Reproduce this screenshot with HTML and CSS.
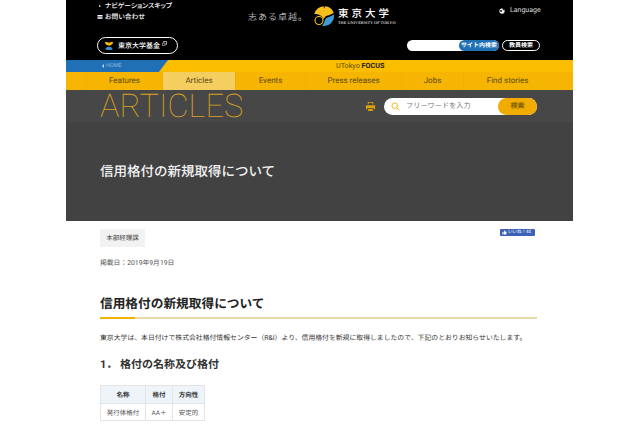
FILE: index.html
```html
<!DOCTYPE html>
<html lang="ja">
<head>
<meta charset="utf-8">
<title>信用格付の新規取得について</title>
<link rel="stylesheet" href="styles.css">
</head>
<body>
<div class="page">
  <header class="top">
    <div class="top-col top-left">
      <div class="skip-links">
        <div class="skip-link"><svg class="mini" viewBox="0 0 6 6"><path d="M2.200 0.500 L3.800 2.500 L2.200 3Z" fill="#fff"/></svg>ナビゲーションスキップ</div>
        <div class="skip-link"><svg class="mini" viewBox="0 0 6 6"><path d="M0.500 1H5.500V2.400H0.500ZM0.500 3.200H5.500V4.800H0.500Z" fill="#fff"/></svg>お問い合わせ</div>
      </div>
      <div class="fund-btn">
        <svg class="fund-icon" viewBox="0 0 12 12"><path d="M1 1.500C3 .7 4.500 1.200 6 2 7.500 1.200 9 .7 11 1.500 10.500 4 8.500 5.400 6 5.600 3.500 5.400 1.500 4 1 1.500Z" fill="#f5b800"/><path d="M1.500 10C2.500 7.800 4 7 6 7s3.500.8 4.500 3C9 11.200 3 11.200 1.500 10Z" fill="#3a8fd0"/></svg>
        <span>東京大学基金</span>
        <svg class="ext" viewBox="0 0 6 6"><path d="M2 .5H5.500V4H4M2 .5V2" fill="none" stroke="#fff" stroke-width=".8"/><path d="M.5 2.500H3.500V5.500H.5Z" fill="none" stroke="#fff" stroke-width=".6"/></svg>
      </div>
    </div>
    <div class="top-center">
      <span class="motto">志ある卓越。</span>
      <svg class="ginkgo" viewBox="0 0 20 20">
        <path d="M.3 8A10 10 0 0 1 9.600.2L10.300 2.800 11 .2A10 10 0 0 1 19.800 7C16 9 13 9.500 11.500 10.500L9.500 13C8.500 10 5 8 .3 8Z" fill="#f6bf1c"/>
        <path d="M19.900 8.500A10 10 0 0 1 8 19.800C10 18 10.500 14.500 12 12 15 11 17.500 10 19.900 8.500Z" fill="#3f9bd8"/>
        <circle cx="5" cy="14.500" r="4" fill="none" stroke="#f6bf1c" stroke-width="1.100"/>
      </svg>
      <div class="utokyo">
        <span class="utokyo-ja">東京大学</span>
        <span class="utokyo-en">THE UNIVERSITY OF TOKYO</span>
      </div>
    </div>
    <div class="top-col top-right">
      <div class="lang"><svg class="globe" viewBox="0 0 8 8"><circle cx="4" cy="4" r="3.500" fill="#fff"/><path d="M1 3H4V5H2ZM5 1H6.500V3H5Z" fill="#000"/></svg>Language</div>
      <div class="site-search">
        <div class="search-field"><span class="search-tag">サイト内検索</span></div>
        <span class="staff-btn">教員検索</span>
      </div>
    </div>
  </header>

  <div class="focus-bar">
    <div class="home-tab"><span class="home-arrow"></span>HOME</div>
    <div class="focus-title">UTokyo <b>FOCUS</b></div>
  </div>

  <nav class="nav">
    <a class="nav-item">Features</a>
    <a class="nav-item nav-current">Articles</a>
    <a class="nav-item">Events</a>
    <a class="nav-item">Press releases</a>
    <a class="nav-item">Jobs</a>
    <a class="nav-item">Find stories</a>
  </nav>

  <div class="articles-bar">
    <div class="articles-title">ARTICLES</div>
    <div class="articles-tools">
      <svg class="printer" viewBox="0 0 12 12"><path d="M3 1H9V3.500H8V2H4V3.500H3ZM1 4.500H11V9H9.500V7.500H2.500V9H1ZM3.500 8.500H8.500V11H3.500Z" fill="#dca000"/></svg>
      <div class="free-search">
        <svg class="lens" viewBox="0 0 12 12"><circle cx="5" cy="5" r="3.700" fill="none" stroke="#f2b200" stroke-width="1.200"/><path d="M7.800 7.800L11 11" stroke="#f2b200" stroke-width="1.300"/></svg>
        <span class="free-text">フリーワードを入力</span>
        <span class="free-btn">検索</span>
      </div>
    </div>
  </div>

  <section class="hero">
    <h1 class="hero-title">信用格付の新規取得について</h1>
  </section>

  <main class="content">
    <div class="meta-row">
      <span class="dept">本部経理課</span>
      <span class="like"><svg class="thumb" viewBox="0 0 6 6"><path d="M.5 2.500H1.500V5.500H.5ZM2 2.500L3 .5H3.800V2H5.500L5 5.500H2Z" fill="#fff"/></svg>いいね！48</span>
    </div>
    <p class="date">掲載日：2019年9月19日</p>
    <h2 class="main-head">信用格付の新規取得について</h2>
    <p class="lead">東京大学は、本日付けで株式会社格付情報センター（R&amp;I）より、信用格付を新規に取得しましたので、下記のとおりお知らせいたします。</p>
    <h3 class="sub-head">1． 格付の名称及び格付</h3>
    <table class="rating">
      <tr><th>名称</th><th>格付</th><th>方向性</th></tr>
      <tr><td>発行体格付</td><td>AA＋</td><td>安定的</td></tr>
    </table>
  </main>
</div>
</body>
</html>
```

FILE: styles.css
```css
* { box-sizing: border-box; }
html, body { margin: 0; padding: 0; background: #fff; height: 426px; overflow: hidden; }
body { font-family: "Roboto", "Noto Sans CJK JP", sans-serif; color: #333; text-rendering: geometricPrecision; }
.page { width: 507px; margin-left: 66px; }

.top { height: 60px; background: #000; display: flex; color: #fff; }
.top-col { display: flex; flex-direction: column; }
.top-left { width: 170px; padding: 2px 0 0 31px; }
.skip-links { display: flex; flex-direction: column; gap: 1px; height: 35px; }
.skip-link { font-size: 6.800px; line-height: 9.500px; font-weight: 500; font-feature-settings: "palt"; display: flex; align-items: center; gap: 2px; }
.mini { width: 6px; height: 6px; }
.fund-btn { width: 81px; height: 17px; border: 1px solid #fff; border-radius: 9px; display: flex; align-items: center; padding-left: 6px; gap: 2px; font-size: 7px; font-weight: 500; }
.fund-icon { width: 10px; height: 10px; margin-right: 2px; }
.ext { width: 5px; height: 5px; align-self: flex-start; margin-top: 3px; }
.top-center { width: 155px; height: 32px; display: flex; align-items: center; padding-left: 12px; }
.motto { font-family: "Noto Sans CJK JP", serif; font-size: 9px; font-weight: 300; letter-spacing: 1px; width: 66px; white-space: nowrap; color: #eee; flex: none; }
.ginkgo { width: 20px; height: 20px; margin-right: 4px; flex: none; }
.utokyo { display: flex; flex-direction: column; flex: none; }
.utokyo-ja { font-family: "Noto Sans CJK JP", serif; font-size: 10.500px; line-height: 12px; letter-spacing: 3px; font-weight: 500; white-space: nowrap; }
.utokyo-en { font-family: "Liberation Serif", serif; font-size: 4.300px; line-height: 5px; white-space: nowrap; }
.top-right { flex: 1; padding-left: 16px; }
.lang { font-size: 7px; line-height: 9px; margin: 6px 0 0 92px; display: flex; align-items: center; gap: 5px; height: 9px; color: #ddd; }
.globe { width: 6px; height: 6px; }
.site-search { display: flex; margin-top: 25px; gap: 3px; }
.search-field { width: 92px; height: 11px; background: #fff; border-radius: 6px; display: flex; justify-content: flex-end; }
.search-tag { width: 40px; height: 11px; background: #1f70b4; border-radius: 6px; font-size: 6px; line-height: 11px; font-weight: 700; text-align: center; white-space: nowrap; }
.staff-btn { width: 38px; height: 11px; border: 1px solid #fff; border-radius: 6px; font-size: 6px; line-height: 9px; font-weight: 700; text-align: center; }

.focus-bar { height: 12px; background: #fbbd00; display: flex; }
.home-tab { width: 102px; background: #1f70b4; clip-path: polygon(0 0, 100% 0, 91% 100%, 0 100%); padding-left: 36px; color: #8db8dc; font-size: 5.500px; line-height: 12px; display: flex; align-items: center; gap: 2px; }
.home-arrow { border-top: 2px solid transparent; border-bottom: 2px solid transparent; border-right: 2px solid #ccdcec; width: 2px; height: 4px; }
.focus-title { flex: 1; padding-left: 168px; font-size: 7.200px; line-height: 12px; color: #5b4a10; }
.focus-title b { color: #222; font-weight: 700; }

.nav { height: 18px; background: #f5b502; display: grid; grid-template-columns: 20px 76px 73px 70px 96px 62px 88px 22px; }
.nav::before, .nav::after { content: ""; }
.nav-item { font-size: 8px; line-height: 18px; text-align: center; color: #5c4a10; border-left: 1px solid #efb000; }
.nav-current { background: #f5ce60; }

.articles-bar { height: 32px; background: #474747; display: flex; justify-content: space-between; }
.articles-title { font-weight: 100; font-size: 32.600px; line-height: 32px; color: #d9a31f; margin-left: 34px; height: 32px; }
.articles-tools { display: flex; align-items: center; padding-right: 36px; gap: 8px; height: 32px; }
.printer { width: 11px; height: 11px; }
.free-search { width: 153px; height: 17px; background: #fff; border-radius: 9px; display: flex; align-items: center; padding-left: 7px; }
.lens { width: 9px; height: 9px; margin-right: 6px; }
.free-text { font-size: 7.200px; color: #777; }
.free-btn { margin-left: auto; width: 39px; height: 17px; background: #f2ab00; border-radius: 9px; font-size: 7px; font-weight: 500; line-height: 17px; text-align: center; color: #6b5200; }

.hero { height: 99px; background: #424242; padding: 41px 0 0 34px; }
.hero-title { margin: 0; font-size: 13.500px; font-weight: 500; line-height: 18px; color: #f2f2f2; }

.content { padding: 8px 36px 0 34px; }
.meta-row { display: flex; justify-content: space-between; align-items: flex-start; height: 18px; }
.dept { background: #f2f2f2; width: 45px; height: 18px; font-size: 6.500px; line-height: 18px; text-align: center; color: #444; }
.like { background: #3b62b5; color: #fff; font-size: 4.500px; line-height: 6px; height: 7px; width: 35px; margin-right: 2px; display: flex; align-items: center; gap: 1px; padding-left: 2px; white-space: nowrap; border-radius: 1px; }
.thumb { width: 5px; height: 5px; }
.date { margin: 11px 0 0; font-size: 6.800px; line-height: 10px; color: #555; }
.main-head { margin: 28px 0 0; height: 23px; font-size: 12.700px; font-weight: 700; line-height: 18px; color: #222; border-bottom: 2px solid #e9d9a8; position: relative; }
.main-head::after { content: ""; position: absolute; left: 0; bottom: -2px; width: 35px; height: 2px; background: #f2b200; }
.lead { margin: 14px 0 0; font-size: 6.850px; line-height: 10px; color: #333; white-space: nowrap; }
.sub-head { margin: 14px 0 0; font-size: 11px; font-weight: 700; line-height: 16px; color: #333; }
.rating { margin-top: 12px; border-collapse: collapse; font-size: 6.500px; }
.rating th, .rating td { border: 1px solid #e4e4e4; height: 17.500px; padding: 0; text-align: center; }
.rating th { background: #eef4fa; font-weight: 700; color: #333; }
.rating td { color: #555; }
.rating th:nth-child(1) { width: 45px; }
.rating th:nth-child(2) { width: 27px; }
.rating th:nth-child(3) { width: 32px; }
```
